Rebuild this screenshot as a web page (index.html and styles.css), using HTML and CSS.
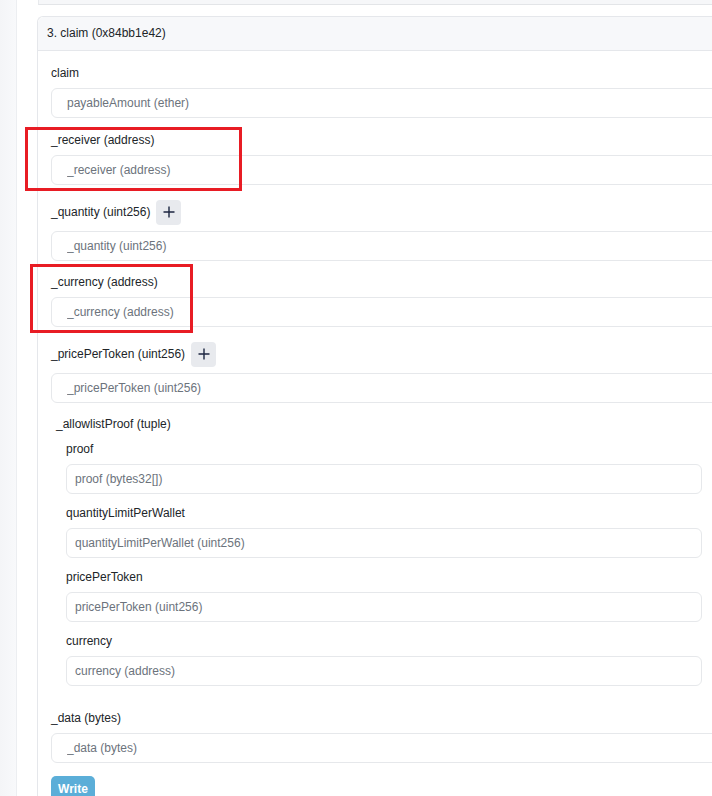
FILE: index.html
```html
<!DOCTYPE html>
<html lang="en">
<head>
  <meta charset="UTF-8" />
  <meta name="viewport" content="width=device-width, initial-scale=1.0" />
  <title>Write Contract</title>
  <link rel="stylesheet" href="styles.css">
</head>
<body>
  <div class="page">
    <div class="side-strip"></div>

    <div class="main">
      <div class="prev-card"></div>

      <div class="card">
        <div class="card-header">3. claim (0x84bb1e42)</div>

        <div class="card-body">
          <div class="field">
            <label class="field-label">claim</label>
            <input class="field-input" type="text" placeholder="payableAmount (ether)">
          </div>

          <div class="field">
            <div class="mark mark-receiver"></div>
            <label class="field-label">_receiver (address)</label>
            <input class="field-input" type="text" placeholder="_receiver (address)">
          </div>

          <div class="field field-array">
            <div class="label-row">
              <label class="field-label">_quantity (uint256)</label>
              <button class="plus-btn" type="button">
                <svg width="12" height="12" viewBox="0 0 12 12"><path d="M6 0.5v11M0.5 6h11" stroke="#1b2540" stroke-width="1.4" fill="none"/></svg>
              </button>
            </div>
            <input class="field-input" type="text" placeholder="_quantity (uint256)">
          </div>

          <div class="field">
            <div class="mark mark-currency"></div>
            <label class="field-label">_currency (address)</label>
            <input class="field-input" type="text" placeholder="_currency (address)">
          </div>

          <div class="field field-array">
            <div class="label-row">
              <label class="field-label">_pricePerToken (uint256)</label>
              <button class="plus-btn" type="button">
                <svg width="12" height="12" viewBox="0 0 12 12"><path d="M6 0.5v11M0.5 6h11" stroke="#1b2540" stroke-width="1.4" fill="none"/></svg>
              </button>
            </div>
            <input class="field-input" type="text" placeholder="_pricePerToken (uint256)">
          </div>

          <div class="tuple">
            <label class="tuple-label">_allowlistProof (tuple)</label>
            <div class="tuple-fields">
              <div class="sub-field">
                <label class="field-label">proof</label>
                <input class="sub-input" type="text" placeholder="proof (bytes32[])">
              </div>
              <div class="sub-field">
                <label class="field-label">quantityLimitPerWallet</label>
                <input class="sub-input" type="text" placeholder="quantityLimitPerWallet (uint256)">
              </div>
              <div class="sub-field">
                <label class="field-label">pricePerToken</label>
                <input class="sub-input" type="text" placeholder="pricePerToken (uint256)">
              </div>
              <div class="sub-field">
                <label class="field-label">currency</label>
                <input class="sub-input" type="text" placeholder="currency (address)">
              </div>
            </div>
          </div>

          <div class="field">
            <label class="field-label">_data (bytes)</label>
            <input class="field-input" type="text" placeholder="_data (bytes)">
          </div>

          <button class="write-btn" type="button">Write</button>
        </div>
      </div>
    </div>
  </div>
</body>
</html>
```

FILE: styles.css
```css
* {
  box-sizing: border-box;
}

html, body {
  margin: 0;
  padding: 0;
  overflow: hidden;
  background: #fff;
}

body {
  font-family: "Liberation Sans", Arial, sans-serif;
  font-size: 12px;
  color: #212529;
}

.page {
  display: flex;
  width: 712px;
  height: 796px;
  overflow: hidden;
}

.side-strip {
  width: 17px;
  flex-shrink: 0;
  background: linear-gradient(to right, #f4f5f7, #f8f9fb);
  border-right: 1px solid #eceef1;
}

.main {
  flex: 1;
  min-width: 0;
  overflow: hidden;
  padding-left: 20px;
}

.prev-card {
  width: 800px;
  height: 5px;
  margin-left: 1px;
  background: #f6f7f9;
  border-bottom: 1px solid #e3e5e8;
  border-left: 1px solid #e8eaed;
}

.card {
  width: 800px;
  margin-top: 11px;
  border: 1px solid #e5e7eb;
  border-right: none;
  border-bottom: none;
  border-radius: 6px 0 0 0;
  min-height: 780px;
}

.card-header {
  height: 34px;
  line-height: 33px;
  padding: 0 9px;
  background: #f7f8fa;
  border-bottom: 1px solid #e5e7eb;
  border-radius: 6px 0 0 0;
}

.card-body {
  padding: 13px 0 0 13px;
}

.field {
  position: relative;
  margin-bottom: 13px;
}

.field-array {
  margin-bottom: 12px;
}

.field-label {
  display: block;
  height: 18px;
  line-height: 18px;
  margin-bottom: 6px;
}

.label-row {
  display: flex;
  align-items: center;
  gap: 6px;
  height: 27px;
  padding-top: 1px;
  margin-bottom: 6px;
}

.label-row .field-label {
  margin-bottom: 0;
}

.plus-btn {
  width: 25px;
  height: 25px;
  padding: 0;
  border: none;
  border-radius: 4px;
  background: #e8eaee;
  display: flex;
  align-items: center;
  justify-content: center;
}

.field-input,
.sub-input {
  display: block;
  height: 30px;
  border: 1px solid #e6e8eb;
  border-radius: 6px;
  background: #fff;
  font-family: inherit;
  font-size: 12px;
  color: #212529;
  outline: none;
}

.field-input {
  width: 720px;
  padding: 0 15px;
}

.sub-input {
  width: 636px;
  padding: 0 8px;
}

.field-input::placeholder,
.sub-input::placeholder {
  color: #6c737c;
}

.tuple {
  margin-bottom: 13px;
  padding-left: 15px;
}

.tuple-label {
  display: block;
  height: 18px;
  line-height: 18px;
  margin-left: -10px;
  margin-bottom: 7px;
}

.tuple-fields {
  padding-bottom: 10px;
}

.sub-field {
  margin-bottom: 10px;
}

.sub-field:last-child {
  margin-bottom: 0;
}

.write-btn {
  display: block;
  width: 44px;
  height: 25px;
  padding: 0;
  border: none;
  border-radius: 5px;
  background: #5baed8;
  color: #fff;
  font-family: inherit;
  font-size: 12px;
  font-weight: bold;
}

/* red annotation boxes drawn over the form */
.mark {
  position: absolute;
  border: 3px solid #e81c24;
  pointer-events: none;
}

.mark-receiver {
  left: -26px;
  top: -4px;
  width: 217px;
  height: 64px;
}

.mark-currency {
  left: -21px;
  top: -9px;
  width: 163px;
  height: 69px;
}
```
